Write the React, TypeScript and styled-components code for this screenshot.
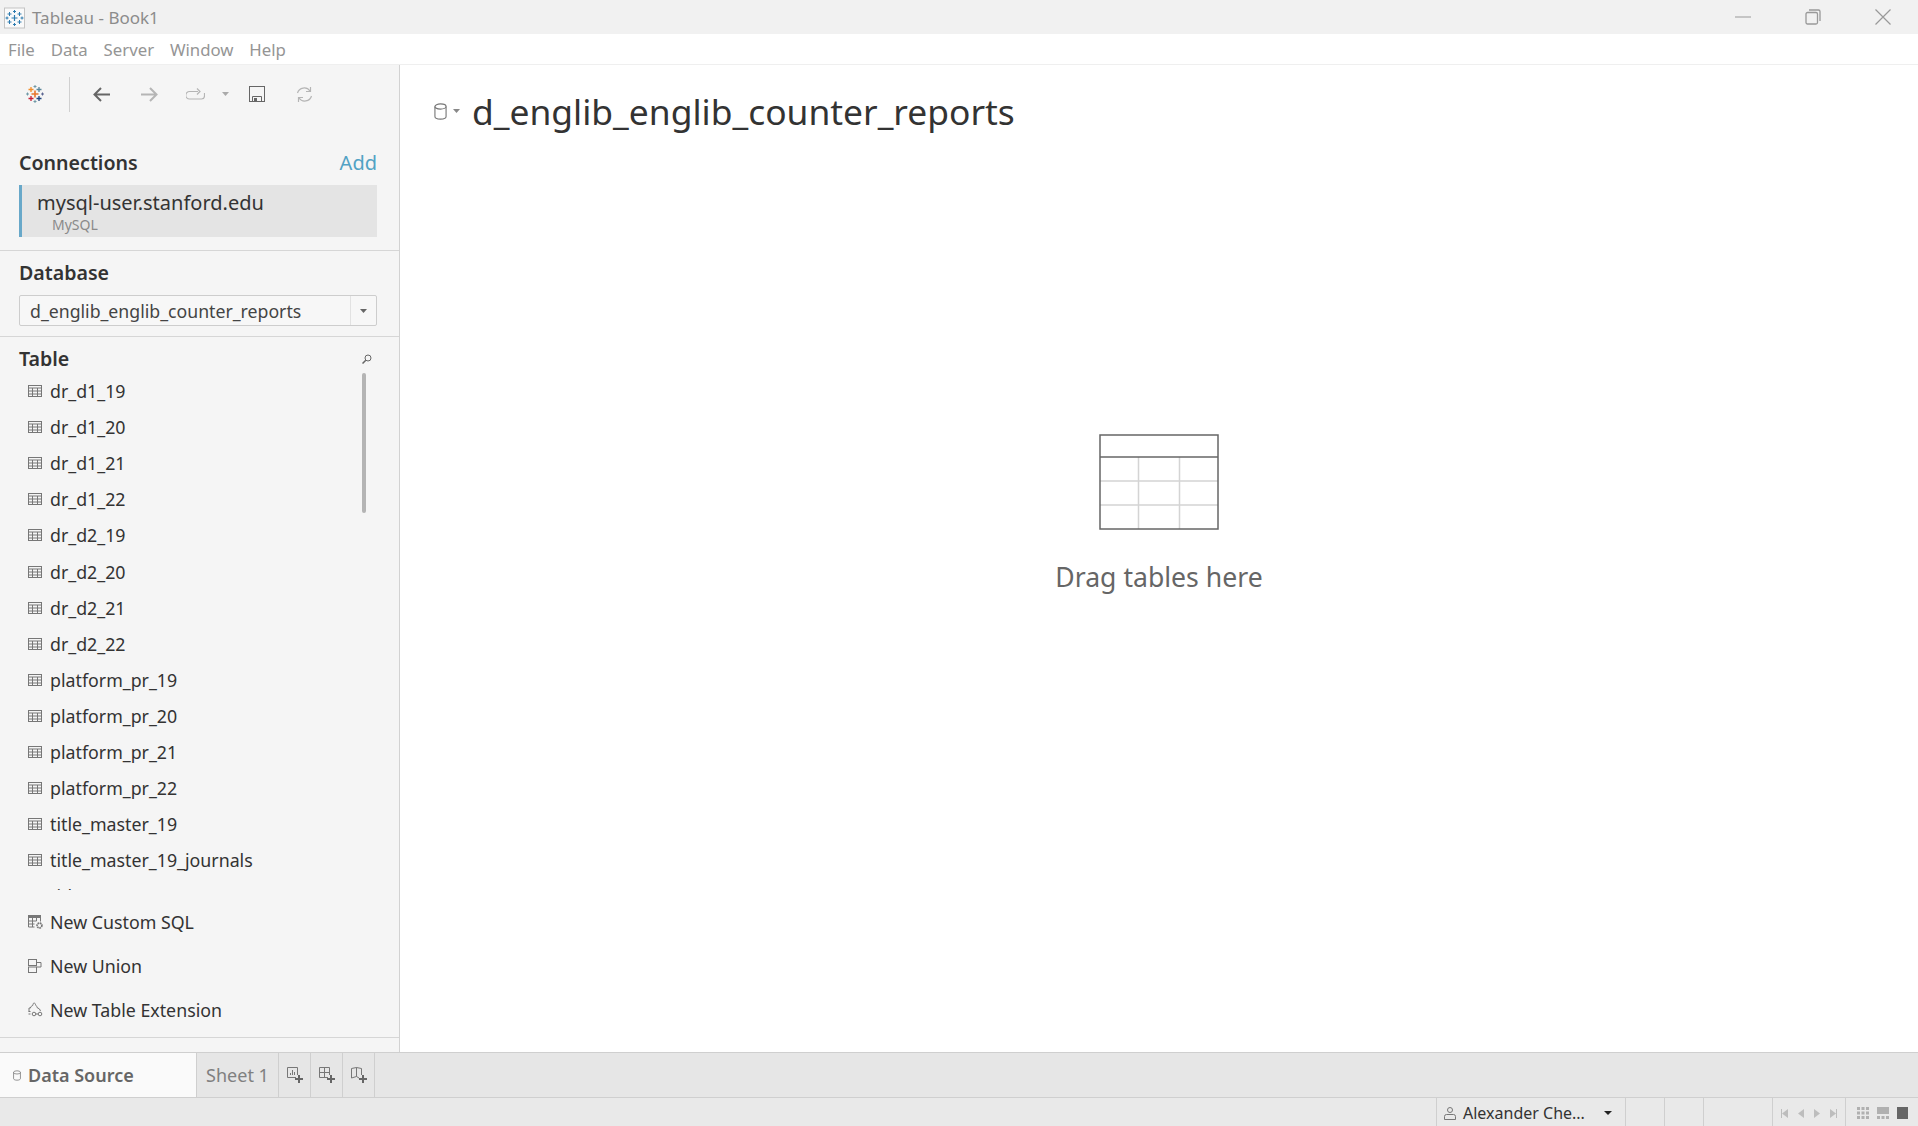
import React from "react";
import styled, { createGlobalStyle } from "styled-components";

const GlobalStyle = createGlobalStyle`
  html, body { margin: 0; padding: 0; height: 100%; background: #fff; }
  body { font-family: "Noto Sans", "Open Sans", sans-serif; overflow: hidden; }
  * { box-sizing: border-box; }
`;

const Page = styled.div`
  width: 1918px;
  height: 1126px;
  display: flex;
  flex-direction: column;
  overflow: hidden;
`;

const TitleBar = styled.header`
  height: 34px;
  background: #f1f1f1;
  display: flex;
  align-items: center;
  padding-left: 4px;
  flex: none;
`;

const AppName = styled.span`
  margin-left: 7px;
  font-size: 17px;
  color: #8c8c8c;
`;

const WindowButtons = styled.div`
  margin-left: auto;
  display: flex;
  align-items: center;
  padding-right: 27px;
  gap: 54px;
`;

const MenuBar = styled.nav`
  height: 31px;
  background: #fff;
  border-bottom: 1px solid #efefef;
  display: flex;
  align-items: center;
  padding-left: 8px;
  gap: 15.8px;
  flex: none;
`;

const MenuItem = styled.span`
  font-size: 16.8px;
  color: #959595;
`;

const Body = styled.div`
  height: 987px;
  flex: none;
  display: flex;
  min-height: 0;
`;

const Sidebar = styled.aside`
  width: 400px;
  flex: none;
  background: #f5f5f5;
  border-right: 1px solid #d2d2d2;
  display: flex;
  flex-direction: column;
`;

const Toolbar = styled.div`
  height: 58px;
  display: flex;
  align-items: center;
  padding-left: 26px;
  flex: none;
`;

const ToolDivider = styled.div`
  width: 1px;
  height: 35px;
  background: #d0d0d0;
  margin: 0 23px 0 25px;
`;

const ToolButton = styled.span<{ $gap?: number }>`
  display: flex;
  margin-right: ${(p) => p.$gap ?? 31}px;
`;

const SectionHead = styled.div`
  display: flex;
  align-items: center;
  justify-content: space-between;
  padding: 0 22px 0 19px;
  font-size: 19.6px;
  line-height: 26px;
  font-weight: 600;
  color: #333;
`;

const AddLink = styled.span`
  font-weight: 400;
  font-size: 20px;
  color: #52a2c4;
`;

const ConnectionSection = styled.section`
  padding-top: 27px;
  height: 128px;
  border-bottom: 1px solid #d6d6d6;
  flex: none;
`;

const ConnectionCard = styled.div`
  margin: 9px 22px 0 19px;
  height: 52px;
  background: #e4e4e4;
  border-left: 3px solid #68a8c9;
  padding: 5px 0 0 15px;
  font-size: 20px;
  line-height: 26px;
  color: #333;
`;

const ConnectionType = styled.div`
  margin: 0 0 0 15px;
  font-size: 14px;
  line-height: 18px;
  color: #8a8a8a;
`;

const DatabaseSection = styled.section`
  height: 86px;
  padding-top: 9px;
  border-bottom: 1px solid #d6d6d6;
  flex: none;
`;

const Select = styled.div`
  margin: 9px 22px 0 19px;
  height: 31px;
  border: 1px solid #cdcdcd;
  border-radius: 2px;
  background: #f7f7f7;
  display: flex;
  align-items: center;
  padding-left: 10px;
  font-size: 17.7px;
  color: #444;
`;

const SelectCaret = styled.span`
  margin-left: auto;
  width: 26px;
  align-self: stretch;
  border-left: 1px solid #e2e2e2;
  display: flex;
  align-items: center;
  justify-content: center;
`;

const TableSection = styled.section`
  flex: 1;
  min-height: 0;
  display: flex;
  flex-direction: column;
  padding-top: 9px;
`;

const TableList = styled.div`
  position: relative;
  height: 517px;
  margin-top: 1px;
  overflow: hidden;
  flex: none;
`;

const ScrollThumb = styled.div`
  position: absolute;
  left: 362px;
  top: 0;
  width: 4px;
  height: 140px;
  border-radius: 2px;
  background: #b4b4b4;
`;

const Row = styled.div<{ $h: number }>`
  height: ${(p) => p.$h}px;
  display: flex;
  align-items: center;
  padding-left: 28px;
  gap: 8px;
  font-size: 17.8px;
  color: #333;
  white-space: nowrap;
  svg {
    flex: none;
    overflow: visible;
  }
`;

const ActionList = styled.div`
  padding-top: 9.5px;
  height: 148px;
  flex: none;
  border-bottom: 1px solid #d6d6d6;
`;

const Main = styled.main`
  flex: 1;
  background: #fff;
  display: flex;
  flex-direction: column;
  align-items: stretch;
`;

const TitleRow = styled.div`
  display: flex;
  align-items: center;
  padding: 12px 0 0 34px;
  height: 80px;
`;

const SourceTitle = styled.h1`
  margin: 0 0 0 12px;
  font-size: 35.4px;
  font-weight: 400;
  color: #333;
`;

const DropZone = styled.div`
  display: flex;
  flex-direction: column;
  align-items: center;
  padding-top: 289px;
`;

const DropText = styled.div`
  margin-top: 29px;
  font-size: 26.6px;
  color: #666;
`;

const TabStrip = styled.div`
  height: 46px;
  flex: none;
  background: #e6e6e6;
  border-top: 1px solid #cfcfcf;
  border-bottom: 1px solid #cfcfcf;
  display: flex;
`;

const DataSourceTab = styled.div`
  width: 196px;
  background: #fafafa;
  display: flex;
  align-items: center;
  padding-left: 13px;
  gap: 7px;
  font-size: 18px;
  font-weight: 600;
  color: #666;
`;

const SheetTab = styled.div`
  width: 83px;
  border-left: 1px solid #cfcfcf;
  border-right: 1px solid #cfcfcf;
  display: flex;
  align-items: center;
  justify-content: center;
  font-size: 18px;
  color: #808080;
`;

const NewTabButton = styled.div`
  width: 32px;
  border-right: 1px solid #cfcfcf;
  display: flex;
  align-items: center;
  justify-content: center;
`;

const StatusBar = styled.footer`
  height: 28px;
  flex: none;
  background: #e9e9e9;
  display: flex;
  justify-content: flex-end;
`;

const StatusCell = styled.div<{ $w: number }>`
  width: ${(p) => p.$w}px;
  border-left: 1px solid #cfcfcf;
  display: flex;
  align-items: center;
  padding-top: 2px;
`;

const UserCell = styled(StatusCell)`
  padding-left: 7px;
  gap: 7px;
  font-size: 16px;
  color: #333;
`;

const UserCaret = styled.span`
  margin-left: auto;
  margin-right: 13px;
  width: 0;
  height: 0;
  border-left: 4px solid transparent;
  border-right: 4px solid transparent;
  border-top: 4px solid #222;
`;

const PagerCell = styled(StatusCell)`
  justify-content: center;
  gap: 8px;
`;

const TableGlyph = () => (
  <svg width="14" height="12" viewBox="0 0 14 12" fill="none" stroke="#777">
    <rect x="0.5" y="0.5" width="13" height="11" />
    <path d="M0 3h14M0 6h14M0 9h14M4.5 3v9M9.5 3v9" strokeWidth="1" />
  </svg>
);

const SqlGlyph = () => (
  <svg width="14" height="14" viewBox="0 0 14 14" fill="none" stroke="#777">
    <path d="M0.5 0.5h12v6M0.500 0.500v11.500h6M0.500 6h8M0.500 9h6M4.500 3v9M8.500 3v3" />
    <path d="M0 0h13v3H0z" fill="#777" stroke="none" />
    <circle cx="11.500" cy="10.500" r="2.400" fill="#f5f5f5" strokeWidth="1.700" strokeDasharray="1.500 .6" />
  </svg>
);

const UnionGlyph = () => (
  <svg width="14" height="14" viewBox="0 0 14 14" fill="none" stroke="#777">
    <rect x="0.5" y="0.5" width="8" height="6" />
    <rect x="0.5" y="8" width="8" height="5.500" />
    <path d="M8.500 3.500h4.500V8H8.500" />
  </svg>
);

const ExtensionGlyph = () => (
  <svg width="14" height="15" viewBox="0 0 14 15" fill="none" stroke="#777">
    <path d="M1 9.500V6h1.500c-.5-2 3-2 2.500-3.500C4.500 1 7.500 .5 7.500 2.500c0 1 1.500 1.500 1.500 3l2.500 1.500 1 2" />
    <path d="M0.500 9.500h2M0.500 12h2" />
    <circle cx="6" cy="12" r="1.800" />
    <circle cx="12" cy="12" r="1.800" />
    <path d="M8 12h2" />
  </svg>
);

const Cylinder = ({ w, h, color }: { w: number; h: number; color: string }) => (
  <svg width={w} height={h} viewBox="0 0 14 18" fill="none" stroke={color} strokeWidth="1.2">
    <ellipse cx="7" cy="3.6" rx="6" ry="2.8" />
    <path d="M1 3.6v10.8c0 1.6 2.7 2.8 6 2.8s6-1.2 6-2.8V3.6" />
  </svg>
);

const Caret = ({ color = "#888" }: { color?: string }) => (
  <svg width="7" height="4" viewBox="0 0 7 4">
    <path d="M0 0h7L3.500 4z" fill={color} />
  </svg>
);

const Plus = ({ x, y, r, c, w = 1.6 }: { x: number; y: number; r: number; c: string; w?: number }) => (
  <path d={`M${x - r} ${y}h${2 * r}M${x} ${y - r}v${2 * r}`} stroke={c} strokeWidth={w} />
);

const TableauMark = () => (
  <svg width="18" height="18" viewBox="0 0 18 18" fill="none">
    <Plus x={9} y={9} r={3.5} c="#e8762d" w={1.6} />
    <Plus x={5} y={4.500} r={2.5} c="#f28e2b" w={1.3} />
    <Plus x={13} y={4.500} r={2.500} c="#5b879b" w={1.3} />
    <Plus x={5} y={13.500} r={2.500} c="#c72037" w={1.3} />
    <Plus x={13} y={13.500} r={2.500} c="#1f447e" w={1.3} />
    <Plus x={9} y={1.500} r={1.500} c="#7099a6" w={1} />
    <Plus x={9} y={16.500} r={1.500} c="#7099a6" w={1} />
    <Plus x={1.500} y={9} r={1.500} c="#7099a6" w={1} />
    <Plus x={16.500} y={9} r={1.500} c="#5b6591" w={1} />
  </svg>
);

const AppIcon = () => (
  <svg width="21" height="24" viewBox="0 0 21 24" fill="none">
    <rect x="0.5" y="3" width="20" height="20" fill="#fafafa" stroke="#c4c4c4" />
    <Plus x={10.500} y={13} r={3} c="#2e7cb0" w={1.2} />
    <Plus x={5.500} y={9} r={2} c="#2e7cb0" w={1} />
    <Plus x={15.500} y={9} r={2} c="#2e7cb0" w={1} />
    <Plus x={5.500} y={17} r={2} c="#2e7cb0" w={1} />
    <Plus x={15.500} y={17} r={2} c="#2e7cb0" w={1} />
    <Plus x={10.500} y={6.500} r={1.500} c="#2e7cb0" w={1} />
    <Plus x={10.500} y={19.500} r={1.500} c="#2e7cb0" w={1} />
    <Plus x={3} y={13} r={1.500} c="#2e7cb0" w={1} />
    <Plus x={18} y={13} r={1.500} c="#2e7cb0" w={1} />
  </svg>
);

const Arrow = ({ flip, color }: { flip?: boolean; color: string }) => (
  <svg width="17" height="15" viewBox="0 0 17 15" fill="none" stroke={color} strokeWidth="2"
    style={flip ? { transform: "scaleX(-1)" } : undefined}>
    <path d="M17 7.500H2M8 1L1.500 7.500 8 14" />
  </svg>
);

const AddSheetGlyph = ({ kind }: { kind: "sheet" | "dash" | "story" }) => (
  <svg width="16" height="16" viewBox="0 0 16 16" fill="none" stroke="#777">
    {kind === "sheet" && <path d="M9 10.500H0.500V0.500h10V8M3.500 8V6M5.500 8V3M7.500 8V5" />}
    {kind === "dash" && <path d="M9 10.500H0.500V0.500h10V8M0.500 5.500h10M5.500 0.500v10" />}
    {kind === "story" && <path d="M8 11L5.500 9.500 0.500 11V1.500l5-1 5 1V8M5.500 0.500v9" />}
    <path d="M8 12h8M12 8v8" stroke="#666" strokeWidth="2" />
  </svg>
);

const tables = [
  "dr_d1_19", "dr_d1_20", "dr_d1_21", "dr_d1_22",
  "dr_d2_19", "dr_d2_20", "dr_d2_21", "dr_d2_22",
  "platform_pr_19", "platform_pr_20", "platform_pr_21", "platform_pr_22",
  "title_master_19", "title_master_19_journals", "title_master_20",
];

export default function App() {
  return (
    <Page>
      <GlobalStyle />
      <TitleBar>
        <AppIcon />
        <AppName>Tableau - Book1</AppName>
        <WindowButtons>
          <svg width="16" height="2" viewBox="0 0 16 2"><path d="M0 1h16" stroke="#999" /></svg>
          <svg width="16" height="16" viewBox="0 0 16 16" fill="none" stroke="#999" strokeWidth="1.300">
            <rect x="1" y="3.500" width="11.500" height="11.500" rx="1.500" />
            <path d="M4 1h9.500a1.500 1.500 0 0 1 1.500 1.500V12" />
          </svg>
          <svg width="16" height="16" viewBox="0 0 16 16" stroke="#999" strokeWidth="1.200">
            <path d="M0.500 0.500l15 15M15.500 0.500l-15 15" />
          </svg>
        </WindowButtons>
      </TitleBar>
      <MenuBar>
        {["File", "Data", "Server", "Window", "Help"].map((m) => (
          <MenuItem key={m}>{m}</MenuItem>
        ))}
      </MenuBar>
      <Body>
        <Sidebar>
          <Toolbar>
            <TableauMark />
            <ToolDivider />
            <ToolButton><Arrow color="#666" /></ToolButton>
            <ToolButton $gap={28}><Arrow flip color="#b5b5b5" /></ToolButton>
            <ToolButton $gap={17}>
              <svg width="19" height="12" viewBox="0 0 19 12" fill="none" stroke="#b5b5b5" strokeWidth="1.200">
                <path d="M12 3.500H3.500a3 3 0 0 0 0 7.500h12a3 3 0 0 0 3-3V5" />
                <path d="M11 0.500l3 3-3 3" />
              </svg>
            </ToolButton>
            <ToolButton $gap={20}><Caret color="#aaa" /></ToolButton>
            <ToolButton>
              <svg width="16" height="16" viewBox="0 0 16 16" fill="none" stroke="#666">
                <rect x="0.500" y="0.500" width="15" height="15" />
                <path d="M3.500 15.500V10.500h9v5" />
                <rect x="5" y="12" width="3" height="4" fill="#666" stroke="none" />
              </svg>
            </ToolButton>
            <ToolButton>
              <svg width="17" height="17" viewBox="0 0 17 17" fill="none" stroke="#b5b5b5" strokeWidth="1.200">
                <path d="M1.500 7A7 7 0 0 1 14 5M15.500 10A7 7 0 0 1 3 12" />
                <path d="M14.500 1v4.500H10M2.500 16v-4.500H7" />
              </svg>
            </ToolButton>
          </Toolbar>
          <ConnectionSection>
            <SectionHead>Connections<AddLink>Add</AddLink></SectionHead>
            <ConnectionCard>
              mysql-user.stanford.edu
              <ConnectionType>MySQL</ConnectionType>
            </ConnectionCard>
          </ConnectionSection>
          <DatabaseSection>
            <SectionHead>Database</SectionHead>
            <Select>
              d_englib_englib_counter_reports
              <SelectCaret><Caret color="#666" /></SelectCaret>
            </Select>
          </DatabaseSection>
          <TableSection>
            <SectionHead>
              Table
              <svg width="10" height="10" viewBox="0 0 10 10" fill="none" stroke="#666" style={{ marginRight: 5 }}>
                <circle cx="6" cy="4" r="3" />
                <path d="M3.800 6.200L0.500 9.500" strokeWidth="1.500" />
              </svg>
            </SectionHead>
            <TableList>
              {tables.map((t) => (
                <Row key={t} $h={36.1}><TableGlyph />{t}</Row>
              ))}
              <ScrollThumb />
            </TableList>
            <ActionList>
              <Row $h={44}><SqlGlyph />New Custom SQL</Row>
              <Row $h={44}><UnionGlyph />New Union</Row>
              <Row $h={44}><ExtensionGlyph />New Table Extension</Row>
            </ActionList>
          </TableSection>
        </Sidebar>
        <Main>
          <TitleRow>
            <Cylinder w={13} h={17} color="#777" />
            <span style={{ display: "flex", marginLeft: 6 }}><Caret /></span>
            <SourceTitle>d_englib_englib_counter_reports</SourceTitle>
          </TitleRow>
          <DropZone>
            <svg width="120" height="96" viewBox="0 0 120 96" fill="none">
              <path d="M39.500 23v72M80.500 23v72M1 47h118M1 71h118" stroke="#d4d4d4" strokeWidth="1.500" />
              <path d="M1 23h118" stroke="#666" strokeWidth="1.500" />
              <rect x="1" y="1" width="118" height="94" stroke="#666" strokeWidth="1.500" />
            </svg>
            <DropText>Drag tables here</DropText>
          </DropZone>
        </Main>
      </Body>
      <TabStrip>
        <DataSourceTab>
          <Cylinder w={8} h={11} color="#666" />
          Data Source
        </DataSourceTab>
        <SheetTab>Sheet 1</SheetTab>
        <NewTabButton><AddSheetGlyph kind="sheet" /></NewTabButton>
        <NewTabButton><AddSheetGlyph kind="dash" /></NewTabButton>
        <NewTabButton><AddSheetGlyph kind="story" /></NewTabButton>
      </TabStrip>
      <StatusBar>
        <UserCell $w={189}>
          <svg width="12" height="13" viewBox="0 0 12 13" fill="none" stroke="#777">
            <circle cx="6" cy="3" r="2.500" />
            <path d="M0.500 12.500V9.500a2 2 0 0 1 2-2h7a2 2 0 0 1 2 2v3z" />
          </svg>
          Alexander Che...
          <UserCaret />
        </UserCell>
        <StatusCell $w={39} />
        <StatusCell $w={39} />
        <StatusCell $w={69} />
        <PagerCell $w={73}>
          {["M7 0v9L1 4.500zM0 0h1v9H0z", "M7 0v9L1 4.500z", "M1 0v9l6-4.500z", "M1 0v9l6-4.500zM7 0h1v9H7z"].map((d) => (
            <svg key={d} width="8" height="9" viewBox="0 0 8 9"><path d={d} fill="#bdbdbd" /></svg>
          ))}
        </PagerCell>
        <PagerCell $w={73}>
          <svg width="12" height="12" viewBox="0 0 12 12" fill="#b0b0b0">
            <path d="M0 0h3v3H0zM4.500 0h3v3h-3zM9 0h3v3H9zM0 4.500h3v3H0zM4.500 4.500h3v3h-3zM9 4.500h3v3H9zM0 9h3v3H0zM4.500 9h3v3h-3zM9 9h3v3H9z" />
          </svg>
          <svg width="12" height="12" viewBox="0 0 12 12" fill="#b0b0b0">
            <path d="M0 0h12v7H0zM0 9h3v3H0zM4.500 9h3v3h-3zM9 9h3v3H9z" />
          </svg>
          <svg width="11" height="12" viewBox="0 0 11 12" fill="#666"><path d="M0 0h11v12H0z" /></svg>
        </PagerCell>
      </StatusBar>
    </Page>
  );
}
